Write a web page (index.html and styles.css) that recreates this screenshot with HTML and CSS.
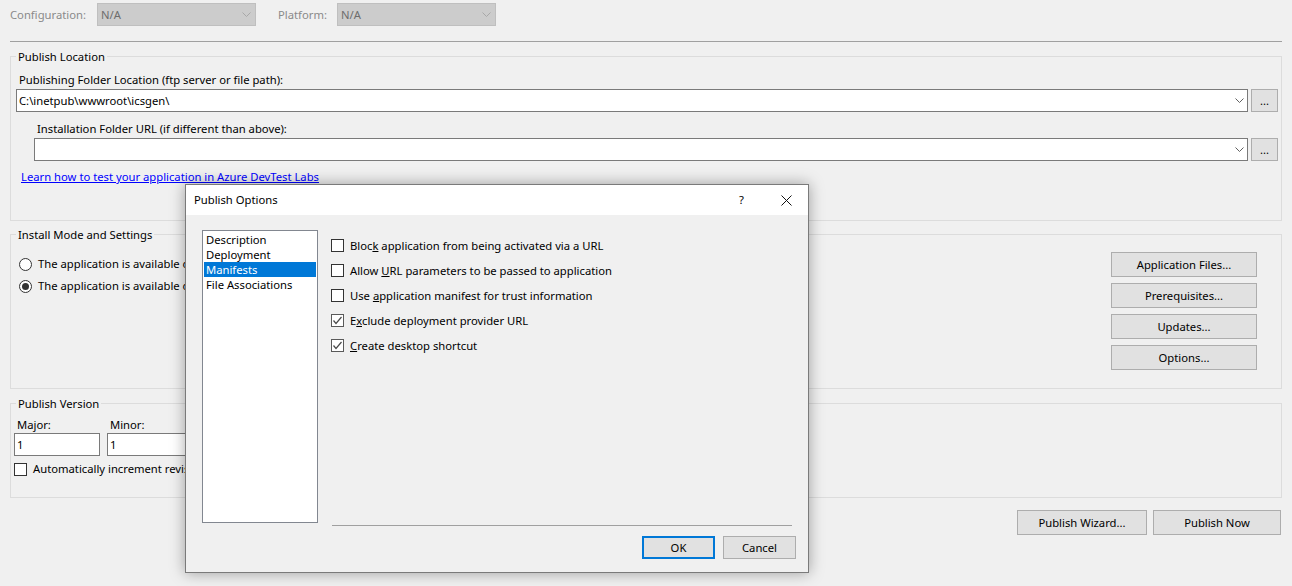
FILE: index.html
```html
<!DOCTYPE html>
<html lang="en">
<head>
  <meta charset="UTF-8" />
  <meta name="viewport" content="width=device-width, initial-scale=1" />
  <title>Publish - Project Properties</title>
  <link rel="stylesheet" href="styles.css">
</head>
<body>
  <!-- CONFIGURATION -->
  <div class="config-bar">
    <span class="config-label label-configuration">Configuration:</span>
    <div class="combo combo-disabled">
      <span class="combo-text">N/A</span>
      <svg class="chevron" width="9" height="5" viewBox="0 0 9 5"><polyline points="0.5,0.5 4.5,4.5 8.5,0.5" /></svg>
    </div>
    <span class="config-label label-platform">Platform:</span>
    <div class="combo combo-disabled">
      <span class="combo-text">N/A</span>
      <svg class="chevron" width="9" height="5" viewBox="0 0 9 5"><polyline points="0.5,0.5 4.5,4.5 8.5,0.5" /></svg>
    </div>
  </div>
  <div class="rule"></div>

  <!-- PUBLISH LOCATION -->
  <fieldset class="group group-location">
    <legend>Publish Location</legend>
    <div class="field-label">Publishing Folder Location (ftp server or file path):</div>
    <div class="path-row">
      <div class="combo combo-edit">
        <span class="combo-text">C:\inetpub\wwwroot\icsgen\</span>
        <svg class="chevron" width="9" height="5" viewBox="0 0 9 5"><polyline points="0.5,0.5 4.5,4.5 8.5,0.5" /></svg>
      </div>
      <button class="btn btn-browse">...</button>
    </div>
    <div class="indented">
      <div class="field-label">Installation Folder URL (if different than above):</div>
      <div class="path-row">
        <div class="combo combo-edit">
          <span class="combo-text"></span>
          <svg class="chevron" width="9" height="5" viewBox="0 0 9 5"><polyline points="0.5,0.5 4.5,4.5 8.5,0.5" /></svg>
        </div>
        <button class="btn btn-browse">...</button>
      </div>
    </div>
    <a class="link" href="#">Learn how to test your application in Azure DevTest Labs</a>
  </fieldset>

  <!-- INSTALL MODE -->
  <fieldset class="group group-install">
    <legend>Install Mode and Settings</legend>
    <div class="install-body">
      <div class="radio-list">
        <label class="radio-row"><span class="radio"></span><span>The application is available online only</span></label>
        <label class="radio-row"><span class="radio radio-on"></span><span>The application is available offline as well (launchable from Start menu)</span></label>
      </div>
      <div class="side-buttons">
        <button class="btn btn-side">Application Files...</button>
        <button class="btn btn-side">Prerequisites...</button>
        <button class="btn btn-side">Updates...</button>
        <button class="btn btn-side">Options...</button>
      </div>
    </div>
  </fieldset>

  <!-- PUBLISH VERSION -->
  <fieldset class="group group-version">
    <legend>Publish Version</legend>
    <div class="version-row">
      <div class="version-field">
        <div class="field-label">Major:</div>
        <div class="text-input">1</div>
      </div>
      <div class="version-field">
        <div class="field-label">Minor:</div>
        <div class="text-input">1</div>
      </div>
      <div class="version-field">
        <div class="field-label">Build:</div>
        <div class="text-input">0</div>
      </div>
      <div class="version-field">
        <div class="field-label">Revision:</div>
        <div class="text-input">0</div>
      </div>
    </div>
    <label class="check-row check-row-version"><span class="check"></span><span>Automatically increment revision with each publish</span></label>
  </fieldset>

  <div class="publish-buttons">
    <button class="btn btn-wizard">Publish Wizard...</button>
    <button class="btn btn-now">Publish Now</button>
  </div>

  <!-- DIALOG -->
  <div class="dialog">
    <div class="dialog-title">
      <span class="dialog-caption">Publish Options</span>
      <span class="dialog-help">?</span>
      <svg class="dialog-close" width="11" height="11" viewBox="0 0 11 11"><path d="M0.5 0.5 L10.5 10.5 M10.5 0.5 L0.5 10.5" /></svg>
    </div>
    <div class="dialog-body">
      <div class="listbox">
        <div class="list-item">Description</div>
        <div class="list-item">Deployment</div>
        <div class="list-item list-item-selected">Manifests</div>
        <div class="list-item">File Associations</div>
      </div>
      <div class="dialog-panel">
        <div class="option-list">
          <label class="check-row option-row"><span class="check"></span><span>Bloc<u>k</u> application from being activated via a URL</span></label>
          <label class="check-row option-row"><span class="check"></span><span>Allow <u>U</u>RL parameters to be passed to application</span></label>
          <label class="check-row option-row"><span class="check"></span><span>Use <u>a</u>pplication manifest for trust information</span></label>
          <label class="check-row option-row"><span class="check check-on"><svg width="11" height="11" viewBox="0 0 11 11"><polyline points="1.5,5.5 4,8.5 9.5,2" /></svg></span><span>E<u>x</u>clude deployment provider URL</span></label>
          <label class="check-row option-row"><span class="check check-on"><svg width="11" height="11" viewBox="0 0 11 11"><polyline points="1.5,5.5 4,8.5 9.5,2" /></svg></span><span><u>C</u>reate desktop shortcut</span></label>
        </div>
        <div class="dialog-separator"></div>
        <div class="dialog-buttons">
          <button class="btn btn-dialog btn-default">OK</button>
          <button class="btn btn-dialog">Cancel</button>
        </div>
      </div>
    </div>
  </div>
</body>
</html>
```

FILE: styles.css
```css
:root {
  --fundo: #f0f0f0;
  --borda-grupo: #dcdcdc;
  --borda-campo: #7a7a7a;
  --botao: #e1e1e1;
  --borda-botao: #adadad;
  --azul: #0078d7;
}

body {
  font-family: 'Segoe UI', 'Noto Sans', sans-serif;
  font-size: 11.25px;
  line-height: 16px;
  margin: 0;
  width: 1292px;
  height: 586px;
  overflow: hidden;
  background: var(--fundo);
  color: #000;
  position: relative;
}

button {
  font-family: inherit;
  font-size: 11.25px;
  color: #000;
  padding: 0;
}

/* barra de configuracao */
.config-bar {
  display: flex;
  align-items: center;
  padding: 3px 0 0 10px;
  height: 23px;
}

.config-label {
  color: #8a8a8a;
}

.label-configuration {
  width: 87px;
}

.label-platform {
  width: 59px;
  margin-left: 22px;
}

.combo {
  display: flex;
  align-items: center;
  box-sizing: border-box;
  height: 23px;
  border: 1px solid var(--borda-campo);
  background: #fff;
}

.combo-text {
  flex: 1;
  padding-left: 2px;
  white-space: nowrap;
}

.chevron {
  fill: none;
  stroke: #606060;
  stroke-width: 1;
  margin-right: 3px;
}

.combo-disabled {
  width: 159px;
  background: #cccccc;
  border-color: #bfbfbf;
  color: #6d6d6d;
}

.combo-disabled .combo-text {
  padding-left: 3px;
}

.combo-disabled .chevron {
  stroke: #a8a8a8;
  margin-right: 4px;
}

.rule {
  height: 1px;
  margin: 15px 10px 0 10px;
  background: #a0a0a0;
}

/* grupos */
.group {
  margin: 6px 10px 0 10px;
  border: 1px solid var(--borda-grupo);
  padding: 0 3px 0 5px;
  min-width: 0;
}

.group legend {
  padding: 1px 2px 0 2px;
  height: 16px;
  box-sizing: border-box;
  line-height: 16px;
}

.group-location {
  padding-top: 8px;
  padding-bottom: 35px;
}

.field-label {
  padding-left: 3px;
  white-space: nowrap;
}

.path-row {
  display: flex;
  gap: 3px;
  margin-top: 1px;
}

.combo-edit {
  flex: 1;
}

.indented {
  margin: 9px 0 0 18px;
}

.indented .path-row {
  margin-top: 1px;
}

.btn {
  box-sizing: border-box;
  background: var(--botao);
  border: 1px solid var(--borda-botao);
  height: 25px;
  cursor: pointer;
}

.btn-browse {
  width: 27px;
  height: 23px;
  line-height: 14px;
}

.link {
  display: block;
  width: max-content;
  margin: 8px 0 0 5px;
  color: #0000ff;
  text-decoration: underline;
}

/* modo de instalacao */
.group-install {
  margin-top: 5px;
  padding: 10px 24px 18px 5px;
}

.install-body {
  display: flex;
  justify-content: space-between;
}

.radio-list {
  padding-top: 1px;
}

.radio-row {
  display: flex;
  align-items: center;
  height: 22px;
  gap: 6px;
  padding-left: 3px;
  white-space: nowrap;
}

.radio {
  box-sizing: border-box;
  width: 13px;
  height: 13px;
  border: 1px solid #333;
  border-radius: 50%;
  background: #fff;
  display: flex;
  align-items: center;
  justify-content: center;
}

.radio-on::after {
  content: '';
  width: 7px;
  height: 7px;
  border-radius: 50%;
  background: #333;
}

.side-buttons {
  display: flex;
  flex-direction: column;
  gap: 6px;
}

.btn-side {
  width: 146px;
}

/* versao */
.group-version {
  padding: 6px 3px 20px 3px;
}

.group-version legend {
  margin-left: 2px;
}

.version-row {
  display: flex;
  gap: 7px;
}

.version-field .field-label {
  padding-left: 3px;
}

.text-input {
  box-sizing: border-box;
  width: 86px;
  height: 23px;
  border: 1px solid var(--borda-campo);
  background: #fff;
  padding: 3px 0 0 2px;
}

.check-row {
  display: flex;
  align-items: center;
  gap: 6px;
  white-space: nowrap;
}

.check-row-version {
  height: 16px;
  margin-top: 5px;
}

.check {
  box-sizing: border-box;
  width: 13px;
  height: 13px;
  border: 1px solid #333;
  background: #fff;
  display: flex;
  align-items: center;
  justify-content: center;
  flex: 0 0 13px;
}

.check-on {
  border-color: #5a5a5a;
}

.check svg {
  fill: none;
  stroke: #4a4a4a;
  stroke-width: 1.2;
}

.publish-buttons {
  display: flex;
  justify-content: flex-end;
  gap: 6px;
  margin: 12px 11px 0 0;
}

.btn-wizard {
  width: 130px;
}

.btn-now {
  width: 128px;
}

/* dialogo */
.dialog {
  position: absolute;
  left: 185px;
  top: 184px;
  width: 624px;
  box-sizing: border-box;
  border: 1px solid #7a7a7a;
  background: var(--fundo);
  box-shadow: 0 0 14px rgba(0, 0, 0, 0.35);
}

.dialog-title {
  display: flex;
  align-items: center;
  height: 30px;
  background: #fff;
  padding: 0 16px 0 8px;
}

.dialog-caption {
  flex: 1;
}

.dialog-help {
  margin-right: 37px;
}

.dialog-close {
  fill: none;
  stroke: #111;
  stroke-width: 1;
}

.dialog-body {
  display: flex;
  align-items: flex-start;
  gap: 13px;
  padding: 15px 12px 13px 16px;
}

.listbox {
  box-sizing: border-box;
  width: 116px;
  height: 293px;
  border: 1px solid #828790;
  background: #fff;
  padding: 1px;
}

.list-item {
  height: 15px;
  line-height: 15px;
  padding-left: 2px;
  white-space: nowrap;
}

.list-item-selected {
  background: var(--azul);
  color: #fff;
}

.dialog-panel {
  flex: 1;
  height: 329px;
  display: flex;
  flex-direction: column;
}

.option-list {
  padding-top: 3px;
}

.option-row {
  height: 25px;
}

.dialog-separator {
  margin: auto 4px 0 1px;
  height: 1px;
  background: #a0a0a0;
}

.dialog-buttons {
  display: flex;
  justify-content: flex-end;
  gap: 8px;
  margin-top: 10px;
}

.btn-dialog {
  width: 73px;
  height: 23px;
}

.btn-default {
  border: 2px solid var(--azul);
}
```
